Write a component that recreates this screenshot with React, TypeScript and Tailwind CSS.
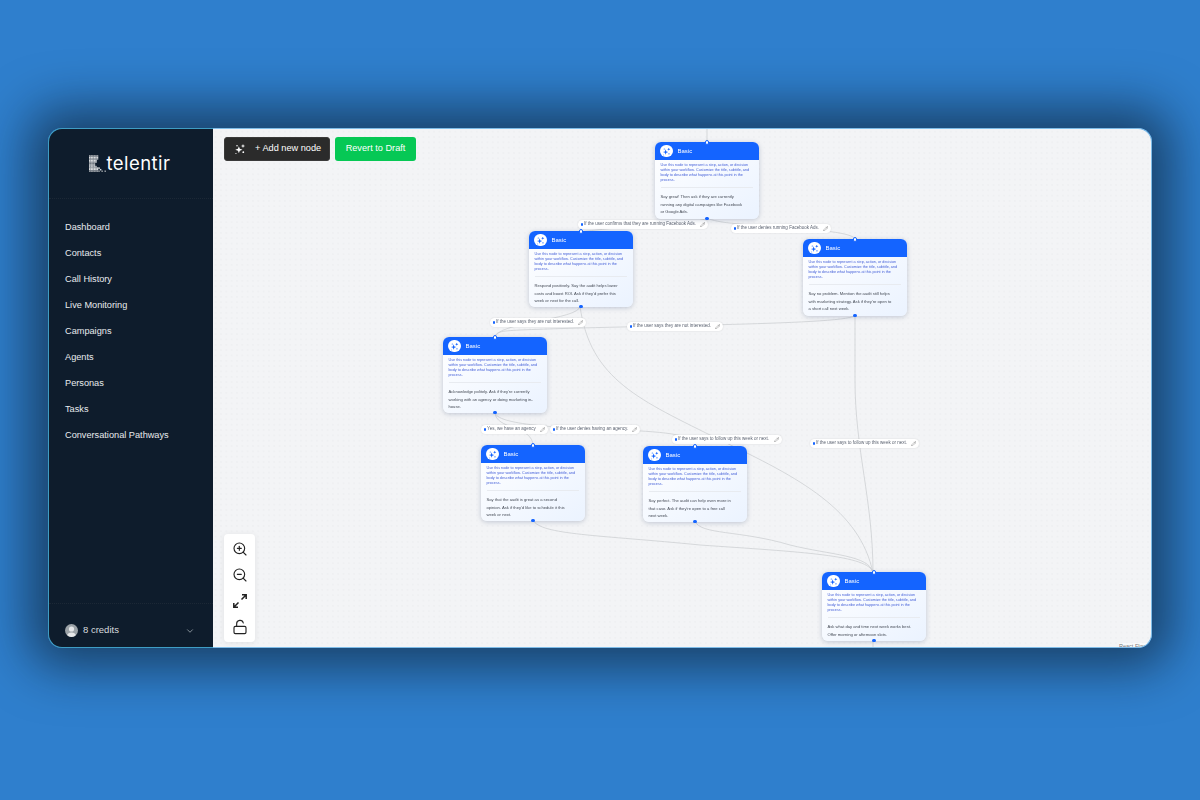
import React from "react";
import { ZoomIn, ZoomOut, LockOpen, ChevronDown, Pencil } from "lucide-react";

const nav = ["Dashboard", "Contacts", "Call History", "Live Monitoring", "Campaigns", "Agents", "Personas", "Tasks", "Conversational Pathways"];

function Spark({ className }: { className: string }) {
  return (
    <svg viewBox="0 0 16 16" className={className} fill="currentColor">
      <path d="M6.5 4.2 7.7 7.8 11.3 9 7.7 10.2 6.5 13.8 5.3 10.2 1.7 9 5.3 7.8Z" />
      <path d="M12 1.2 12.8 3.2 14.8 4 12.8 4.8 12 6.8 11.2 4.8 9.2 4 11.2 3.2Z" />
      <circle cx="4" cy="3.6" r="1" />
      <circle cx="12.4" cy="12.2" r="1.2" />
      <circle cx="2.6" cy="14" r="0.8" />
    </svg>
  );
}

function Logo() {
  const cells: React.ReactNode[] = [];
  const widths = [6, 6, 6, 5, 5, 4, 4, 5, 7, 9, 11];
  for (let r = 0; r < 11; r++) {
    for (let c = 0; c < widths[r]; c++) {
      const fade = c >= 6;
      if (fade && (r + c) % 2 === 1) continue;
      const light = (r * 3 + c * 5) % 5;
      cells.push(<rect key={`${r}-${c}`} x={c * 1.5} y={r * 1.5} width={1.5} height={1.5} fill={light === 0 ? "#8d939a" : light === 1 ? "#b9bdc2" : "#d9dcdf"} />);
    }
  }
  return (
    <svg viewBox="0 0 16.5 16.5" className="h-[17px] w-[17px]">
      {cells}
    </svg>
  );
}

type NodeData = { cls: string; lines: string[] };
const descA = ["Use this node to represent a step, action, or decision", "within your workflow. Customize the title, subtitle, and", "body to describe what happens at this point in the", "process."];

const nodes: NodeData[] = [
  { cls: "left-[442px] top-[13px] h-[77px]", lines: ["Say great! Then ask if they are currently", "running any digital campaigns like Facebook", "or Google Ads."] },
  { cls: "left-[316px] top-[102px] h-[76px]", lines: ["Respond positively. Say the audit helps lower", "costs and boost ROI. Ask if they'd prefer this", "week or next for the call."] },
  { cls: "left-[590px] top-[110px] h-[77px]", lines: ["Say no problem. Mention the audit still helps", "with marketing strategy. Ask if they're open to", "a short call next week."] },
  { cls: "left-[230px] top-[208px] h-[76px]", lines: ["Acknowledge politely. Ask if they're currently", "working with an agency or doing marketing in-", "house."] },
  { cls: "left-[268px] top-[316px] h-[76px]", lines: ["Say that the audit is great as a second", "opinion. Ask if they'd like to schedule it this", "week or next."] },
  { cls: "left-[430px] top-[317px] h-[76px]", lines: ["Say perfect. The audit can help even more in", "that case. Ask if they're open to a free call", "next week."] },
  { cls: "left-[609px] top-[443px] h-[69px]", lines: ["Ask what day and time next week works best.", "Offer morning or afternoon slots."] },
];

function FlowNode({ data }: { data: NodeData }) {
  return (
    <div className={`absolute w-[103.5px] rounded-[6px] bg-gradient-to-br from-white to-[#ebf3ff] shadow-[0_1px_5px_rgba(60,80,120,0.28)] ${data.cls}`}>
      <div className="flex h-[18px] items-center gap-[5px] rounded-t-[6px] bg-[#1464ff] pl-[5px]">
        <div className="flex h-[12.5px] w-[12.5px] items-center justify-center rounded-full bg-white text-[#1464ff]">
          <Spark className="h-[9px] w-[9px]" />
        </div>
        <span className="text-[6px] font-medium text-white blur-[0.2px]">Basic</span>
      </div>
      <div className="px-[5.5px] pt-[2.6px] blur-[0.25px]">
        <div className="text-[3.75px] leading-[5.3px] whitespace-nowrap text-[#4560d8]">
          {descA.map((l) => (
            <div key={l}>{l}</div>
          ))}
        </div>
        <div className="mt-[3.5px] border-t border-[#e8ebf0]" />
        <div className="mt-[5px] text-[4.15px] leading-[7.3px] whitespace-nowrap text-[#444a55]">
          {data.lines.map((l) => (
            <div key={l}>{l}</div>
          ))}
        </div>
      </div>
      <div className="absolute -top-[2px] left-[49.5px] h-[4.5px] w-[4.5px] rounded-full border-[0.8px] border-[#1464ff] bg-white" />
      <div className="absolute -bottom-[1px] left-[50px] h-[3.5px] w-[3.5px] rounded-full bg-[#1464ff]" />
    </div>
  );
}

const labels = [
  { t: "If the user confirms that they are running Facebook Ads.", cls: "left-[365px] top-[91px] w-[130px]" },
  { t: "If the user denies running Facebook Ads.", cls: "left-[518px] top-[95px] w-[100px]" },
  { t: "If the user says they are not interested.", cls: "left-[277px] top-[189px] w-[96px]" },
  { t: "If the user says they are not interested.", cls: "left-[414px] top-[193px] w-[96px]" },
  { t: "Yes, we have an agency", cls: "left-[268px] top-[296px] w-[67px]" },
  { t: "If the user denies having an agency.", cls: "left-[337px] top-[296px] w-[90px]" },
  { t: "If the user says to follow up this week or next.", cls: "left-[459px] top-[306px] w-[110px]" },
  { t: "If the user says to follow up this week or next.", cls: "left-[597px] top-[310px] w-[109px]" },
];

function EdgeLabel({ t, cls }: { t: string; cls: string }) {
  return (
    <div className={`absolute flex h-[9px] items-center justify-between rounded-full bg-white pr-[3px] pl-[2.5px] shadow-[0_0_2px_rgba(0,0,0,0.12)] ${cls}`}>
      <span className="flex items-center gap-[1px] text-[4.5px] whitespace-nowrap text-[#5b6270] blur-[0.25px]">
        <span className="h-[2.6px] w-[2.6px] rounded-full bg-[#1464ff]" />
        {t}
      </span>
      <Pencil className="h-[5.5px] w-[5.5px] text-[#555]" strokeWidth={1.5} />
    </div>
  );
}

const edges = [
  "M707 128 L707 143",
  "M707 217 C707 224 640 224 580 232",
  "M707 217 C712 228 850 226 855 239",
  "M580 306 C580 320 495 322 495 338",
  "M580 306 C590 380 640 400 720 440 C800 478 860 510 873 573",
  "M855 315 C855 325 640 325 520 330 C500 331 495 332 495 338",
  "M855 315 L855 380 C855 450 873 500 873 573",
  "M495 412 C495 430 533 425 533 446",
  "M495 412 C495 425 560 428 620 430 C670 432 695 435 695 447",
  "M533 520 C540 535 600 535 700 545 C800 552 870 555 873 573",
  "M695 521 C700 535 740 530 790 545 C830 555 870 555 873 573",
  "M873 640 L873 647",
];

export default function App() {
  return (
    <div className="h-[800px] w-[1200px] overflow-hidden bg-[#2f7fcd] pt-[128px] pl-[48px] font-['Liberation_Sans',sans-serif]">
      <div className="flex h-[520px] w-[1104px] rounded-[14px] [box-shadow:0_0_50px_20px_rgba(8,16,24,0.55)]">
        <aside className="flex w-[165px] shrink-0 flex-col rounded-l-[14px] border-y border-l border-[#3f9dc4] bg-[#0e1c2c]">
          <div className="flex h-[70px] items-center justify-center gap-[1px] border-b border-dotted border-[#1c2836] pr-[3px]">
            <Logo />
            <span className="font-['Inter',sans-serif] text-[18.5px] leading-none font-normal tracking-[0.45px] text-white">telentir</span>
          </div>
          <nav className="flex flex-1 flex-col gap-[14.5px] pt-[22.5px] pl-[16px]">
            {nav.map((n) => (
              <div key={n} className="text-[9.2px] leading-[11.5px] text-[#e8ebee]">
                {n}
              </div>
            ))}
          </nav>
          <div className="flex h-[44px] items-center border-t border-dotted border-[#1c2836] pt-[10px] pr-[18px] pl-[16px]">
            <div className="flex h-[13px] w-[13px] items-center justify-center overflow-hidden rounded-full bg-[#9ca3a8]">
              <svg viewBox="0 0 13 13" className="h-[13px] w-[13px]">
                <circle cx="6.5" cy="5" r="2.6" fill="#e5e7e9" />
                <ellipse cx="6.5" cy="12" rx="4.6" ry="3.6" fill="#e5e7e9" />
              </svg>
            </div>
            <span className="ml-[5px] flex-1 text-[9.5px] text-[#d7dbdf]">8 credits</span>
            <ChevronDown className="h-[10px] w-[10px] text-[#9aa3ab]" />
          </div>
        </aside>
        <main className="relative flex-1 overflow-hidden rounded-r-[14px] border-y border-r border-[#7fbce8] bg-[#f3f4f6] bg-[radial-gradient(#d8dade_0.5px,transparent_0.65px)] bg-[size:5.33px_5.33px]">
          <svg viewBox="213 129 938 518" className="absolute top-0 left-0 h-[518px] w-[938px]" fill="none" stroke="#c9cbcf" strokeWidth="0.7">
            {edges.map((d) => (
              <path key={d} d={d} />
            ))}
          </svg>
          {labels.map((l, i) => (
            <EdgeLabel key={i} t={l.t} cls={l.cls} />
          ))}
          {nodes.map((n, i) => (
            <FlowNode key={i} data={n} />
          ))}
          <div className="absolute top-[8px] left-[11px] flex gap-[5px]">
            <button className="flex h-[24px] w-[106px] items-center rounded-[3px] border border-[#3a3a3a] bg-[#2b2b2b] pl-[9px] text-[9.2px] text-white">
              <Spark className="h-[12px] w-[12px]" />
              <span className="ml-[9px]">+ Add new node</span>
            </button>
            <button className="h-[24px] w-[81px] rounded-[3px] bg-[#06c855] text-center text-[9.2px] text-white">Revert to Draft</button>
          </div>
          <div className="absolute bottom-[5px] left-[11px] flex w-[31px] flex-col items-center gap-[10px] rounded-[4px] bg-white py-[7px] shadow-[0_1px_6px_rgba(0,0,0,0.08)]">
            <ZoomIn className="h-[16px] w-[16px] text-[#222]" strokeWidth={1.7} />
            <ZoomOut className="h-[16px] w-[16px] text-[#222]" strokeWidth={1.7} />
            <svg viewBox="0 0 16 16" className="h-[16px] w-[16px] text-[#222]" fill="none" stroke="currentColor" strokeWidth="1.5">
              <path d="M9.5 6.5 14 2M10 1.8h4.2V6M6.5 9.5 2 14M6 14.2H1.8V10" />
            </svg>
            <LockOpen className="h-[16px] w-[16px] text-[#222]" strokeWidth={1.7} />
          </div>
          <div className="absolute right-0 bottom-0 h-[4px] w-[32px] overflow-hidden bg-white/50 text-[5.5px] leading-[7px] text-[#777]">React Flow</div>
        </main>
      </div>
    </div>
  );
}
